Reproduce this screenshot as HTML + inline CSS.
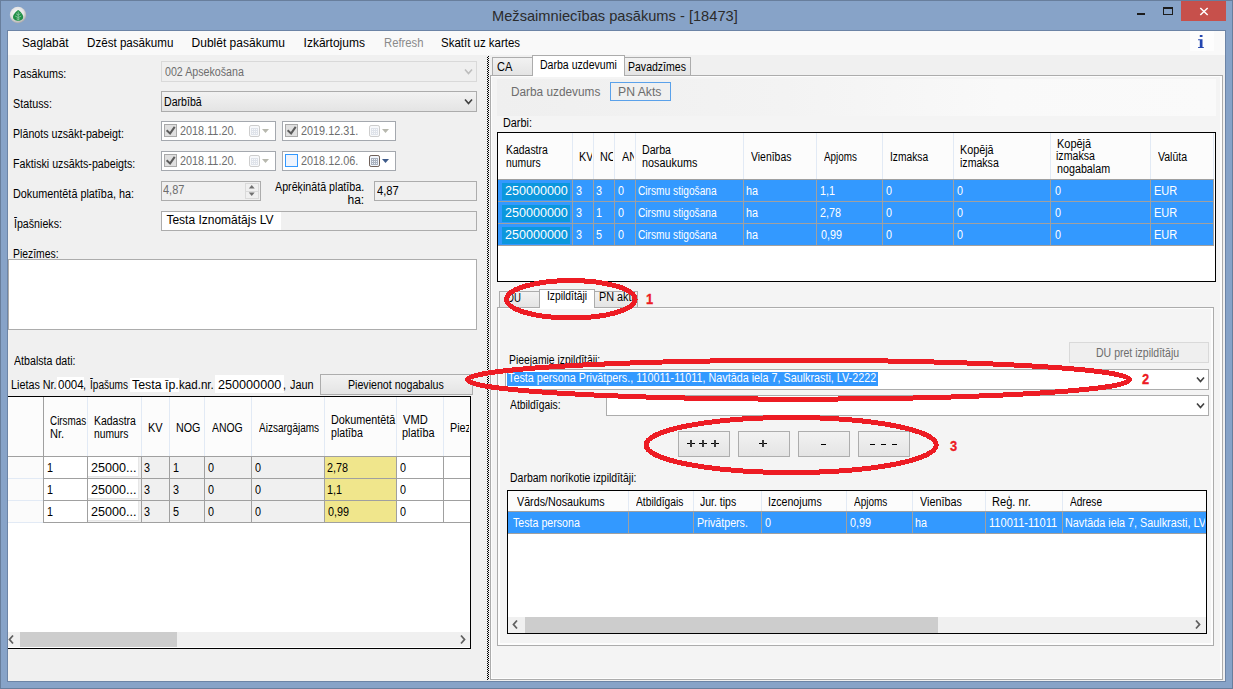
<!DOCTYPE html><html><head><meta charset="utf-8"><style>html,body{margin:0;padding:0;width:1233px;height:689px;overflow:hidden;background:#87a3c8}body{position:relative;font-family:"Liberation Sans",sans-serif}div{position:absolute;box-sizing:border-box}</style></head><body><div style="left:0px;top:0px;width:1233px;height:689px;background:#87a3c8;border:1px solid #687e9c"></div>
<div style="left:7px;top:30px;width:1219px;height:652px;border:1px solid #6c84a6;background:#f0f0f0"></div>
<svg style="position:absolute;left:9px;top:6px" width="18" height="18" viewBox="0 0 18 18"><defs><radialGradient id="ig" cx="45%" cy="40%" r="60%"><stop offset="0" stop-color="#ffffff"/><stop offset="0.65" stop-color="#e4e4e4"/><stop offset="1" stop-color="#a9a9a9"/></radialGradient></defs><circle cx="9" cy="9" r="8.2" fill="url(#ig)"/><path d="M9.2 4 C11.2 5.3 14.2 8.4 14.2 11.1 C14.2 13.6 12 14.9 9.2 14.9 C6.4 14.9 4 13.6 4 11.1 C4 8.4 7.2 5.3 9.2 4Z" fill="#219047"/><path d="M9.2 5.6 V14.6 M9.2 9.2 L7 7.6 M9.2 9.2 L11.4 7.6 M9.2 11.6 L6.2 10 M9.2 11.6 L12.2 10 M9.2 13.4 L7.6 12.8 M9.2 13.4 L10.8 12.8" stroke="#9fd1b0" stroke-width="0.75" fill="none"/></svg>
<div style="left:1181px;top:1px;width:45px;height:20px;background:#c7504b"></div>
<svg style="position:absolute;left:1199px;top:7px" width="10" height="9" viewBox="0 0 10 9"><path d="M1.3 1 L8.7 8 M8.7 1 L1.3 8" stroke="#fff" stroke-width="1.5"/></svg>
<div style="left:1163px;top:7px;width:10px;height:8px;border:1px solid #1c1c1c;border-top-width:2px"></div>
<div style="left:1137px;top:13px;width:8px;height:2px;background:#1c1c1c"></div>
<div style="left:8px;top:31px;width:1217px;height:24px;background:#f9f9f9"></div>
<div style="left:1190px;top:31px;width:24px;height:20px;background:#fdfdfd"></div>
<svg style="position:absolute;left:1196px;top:33px" width="9" height="17" viewBox="0 0 9 17"><rect x="3.8" y="2" width="2.7" height="2" fill="#2447b0"/><path d="M2.1 6.2 H6.5 V13.9 H7.8 V15.1 H2.1 V13.9 H3.8 V7.3 H2.1Z" fill="#2447b0"/></svg>
<div style="left:161px;top:61px;width:316px;height:21px;border:1px solid #d9d9d9;background:#efefef;"></div>
<svg style="position:absolute;left:464px;top:68px" width="10" height="8" viewBox="0 0 10 8"><path d="M1 1.5 L4.5 5.5 L8 1.5" stroke="#bdbdbd" stroke-width="1.6" fill="none"/></svg>
<div style="left:161px;top:91px;width:316px;height:21px;border:1px solid #acacac;background:linear-gradient(#f2f2f2,#e4e4e4);"></div>
<svg style="position:absolute;left:464px;top:98px" width="10" height="8" viewBox="0 0 10 8"><path d="M1 1.5 L4.5 5.5 L8 1.5" stroke="#404040" stroke-width="1.6" fill="none"/></svg>
<div style="left:161px;top:121px;width:115px;height:20px;border:1px solid #a4a8ae;background:#fff;"></div>
<div style="left:164px;top:124px;width:13px;height:13px;border:1px solid #a9a9a9;background:#e0e0e0;"></div>
<svg style="position:absolute;left:164px;top:124px" width="13" height="13" viewBox="0 0 13 13"><path d="M2.6 6.3 L6.1 9.4 L10.7 2.9" stroke="#5c5c5c" stroke-width="2" fill="none"/></svg>
<svg style="position:absolute;left:249px;top:125px" width="12" height="13" viewBox="0 0 12 13"><rect x="0.5" y="0.5" width="10" height="11" rx="1.6" fill="#f8f9fb" stroke="#cdcdcd"/><rect x="2" y="3" width="7" height="7" fill="#dfe3ea"/><rect x="3" y="4" width="1" height="1" fill="#f8f9fb"/><rect x="3" y="6" width="1" height="1" fill="#f8f9fb"/><rect x="3" y="8" width="1" height="1" fill="#f8f9fb"/><rect x="5" y="4" width="1" height="1" fill="#f8f9fb"/><rect x="5" y="6" width="1" height="1" fill="#f8f9fb"/><rect x="5" y="8" width="1" height="1" fill="#f8f9fb"/><rect x="7" y="4" width="1" height="1" fill="#f8f9fb"/><rect x="7" y="6" width="1" height="1" fill="#f8f9fb"/><rect x="7" y="8" width="1" height="1" fill="#f8f9fb"/></svg>
<svg style="position:absolute;left:262px;top:129px" width="8" height="5" viewBox="0 0 8 5"><path d="M0 0 H7 L3.5 4Z" fill="#b7b8ae"/></svg>
<div style="left:282px;top:121px;width:114px;height:20px;border:1px solid #a4a8ae;background:#fff;"></div>
<div style="left:285px;top:124px;width:13px;height:13px;border:1px solid #a9a9a9;background:#e0e0e0;"></div>
<svg style="position:absolute;left:285px;top:124px" width="13" height="13" viewBox="0 0 13 13"><path d="M2.6 6.3 L6.1 9.4 L10.7 2.9" stroke="#5c5c5c" stroke-width="2" fill="none"/></svg>
<svg style="position:absolute;left:369px;top:125px" width="12" height="13" viewBox="0 0 12 13"><rect x="0.5" y="0.5" width="10" height="11" rx="1.6" fill="#f8f9fb" stroke="#cdcdcd"/><rect x="2" y="3" width="7" height="7" fill="#dfe3ea"/><rect x="3" y="4" width="1" height="1" fill="#f8f9fb"/><rect x="3" y="6" width="1" height="1" fill="#f8f9fb"/><rect x="3" y="8" width="1" height="1" fill="#f8f9fb"/><rect x="5" y="4" width="1" height="1" fill="#f8f9fb"/><rect x="5" y="6" width="1" height="1" fill="#f8f9fb"/><rect x="5" y="8" width="1" height="1" fill="#f8f9fb"/><rect x="7" y="4" width="1" height="1" fill="#f8f9fb"/><rect x="7" y="6" width="1" height="1" fill="#f8f9fb"/><rect x="7" y="8" width="1" height="1" fill="#f8f9fb"/></svg>
<svg style="position:absolute;left:382px;top:129px" width="8" height="5" viewBox="0 0 8 5"><path d="M0 0 H7 L3.5 4Z" fill="#b7b8ae"/></svg>
<div style="left:161px;top:151px;width:115px;height:20px;border:1px solid #a4a8ae;background:#fff;"></div>
<div style="left:164px;top:154px;width:13px;height:13px;border:1px solid #a9a9a9;background:#e0e0e0;"></div>
<svg style="position:absolute;left:164px;top:154px" width="13" height="13" viewBox="0 0 13 13"><path d="M2.6 6.3 L6.1 9.4 L10.7 2.9" stroke="#5c5c5c" stroke-width="2" fill="none"/></svg>
<svg style="position:absolute;left:249px;top:155px" width="12" height="13" viewBox="0 0 12 13"><rect x="0.5" y="0.5" width="10" height="11" rx="1.6" fill="#f8f9fb" stroke="#cdcdcd"/><rect x="2" y="3" width="7" height="7" fill="#dfe3ea"/><rect x="3" y="4" width="1" height="1" fill="#f8f9fb"/><rect x="3" y="6" width="1" height="1" fill="#f8f9fb"/><rect x="3" y="8" width="1" height="1" fill="#f8f9fb"/><rect x="5" y="4" width="1" height="1" fill="#f8f9fb"/><rect x="5" y="6" width="1" height="1" fill="#f8f9fb"/><rect x="5" y="8" width="1" height="1" fill="#f8f9fb"/><rect x="7" y="4" width="1" height="1" fill="#f8f9fb"/><rect x="7" y="6" width="1" height="1" fill="#f8f9fb"/><rect x="7" y="8" width="1" height="1" fill="#f8f9fb"/></svg>
<svg style="position:absolute;left:262px;top:159px" width="8" height="5" viewBox="0 0 8 5"><path d="M0 0 H7 L3.5 4Z" fill="#b7b8ae"/></svg>
<div style="left:282px;top:151px;width:114px;height:20px;border:1px solid #a4a8ae;background:#fff;"></div>
<div style="left:285px;top:154px;width:13px;height:13px;border:1px solid #3399ff;background:#eef4fe;"></div>
<svg style="position:absolute;left:369px;top:155px" width="12" height="13" viewBox="0 0 12 13"><rect x="0.5" y="0.5" width="10" height="11" rx="1.6" fill="#f2f6fc" stroke="#6e5f58"/><rect x="2" y="3" width="7" height="7" fill="#a9b1be"/><rect x="3" y="4" width="1" height="1" fill="#eef2f8"/><rect x="3" y="6" width="1" height="1" fill="#eef2f8"/><rect x="3" y="8" width="1" height="1" fill="#eef2f8"/><rect x="5" y="4" width="1" height="1" fill="#eef2f8"/><rect x="5" y="6" width="1" height="1" fill="#eef2f8"/><rect x="5" y="8" width="1" height="1" fill="#eef2f8"/><rect x="7" y="4" width="1" height="1" fill="#eef2f8"/><rect x="7" y="6" width="1" height="1" fill="#eef2f8"/><rect x="7" y="8" width="1" height="1" fill="#eef2f8"/></svg>
<svg style="position:absolute;left:382px;top:159px" width="8" height="5" viewBox="0 0 8 5"><path d="M0 0 H7 L3.5 4Z" fill="#3d5a89"/></svg>
<div style="left:161px;top:181px;width:100px;height:20px;border:1px solid #acacac;background:#f0f0f0;"></div>
<div style="left:245px;top:183px;width:14px;height:16px;background:#f0f0f0;border:1px solid #dadada"></div>
<svg style="position:absolute;left:245px;top:183px" width="14" height="16" viewBox="0 0 14 16"><path d="M3.8 5.4 L6.75 2.1 L9.7 5.4Z" fill="#707070"/><path d="M3.8 9.6 L6.75 13.1 L9.7 9.6Z" fill="#707070"/><path d="M1 8.5 H13" stroke="#dadada"/></svg>
<div style="left:374px;top:181px;width:103px;height:20px;border:1px solid #acacac;background:#f0f0f0;"></div>
<div style="left:161px;top:211px;width:316px;height:20px;border:1px solid #acacac;background:#f0f0f0;"></div>
<div style="left:162px;top:212px;width:119px;height:18px;background:#fff"></div>
<div style="left:8px;top:259px;width:469px;height:71px;border:1px solid #acacac;background:#fff;"></div>
<div style="left:57px;top:377px;width:27px;height:13px;background:#fff"></div>
<div style="left:130px;top:378px;width:49px;height:14px;background:#fff"></div>
<div style="left:215px;top:375px;width:69px;height:18px;background:#fff"></div>
<div style="left:320px;top:374px;width:153px;height:21px;border:1px solid #adadad;background:linear-gradient(#f2f2f2,#e4e4e4);"></div>
<div style="left:8px;top:396px;width:463px;height:253px;background:#fff;border-top:1px solid #000;border-right:1px solid #000;border-bottom:1px solid #000"></div>
<div style="left:8px;top:397px;width:462px;height:59px;background:#fcfcfc"></div>
<div style="left:8px;top:456px;width:462px;height:1px;background:#a0a0a0"></div>
<div style="left:87px;top:397px;width:1px;height:59px;background:#e2eaf5"></div>
<div style="left:141px;top:397px;width:1px;height:59px;background:#e2eaf5"></div>
<div style="left:169px;top:397px;width:1px;height:59px;background:#e2eaf5"></div>
<div style="left:204px;top:397px;width:1px;height:59px;background:#e2eaf5"></div>
<div style="left:251px;top:397px;width:1px;height:59px;background:#e2eaf5"></div>
<div style="left:324px;top:397px;width:1px;height:59px;background:#e2eaf5"></div>
<div style="left:396px;top:397px;width:1px;height:59px;background:#e2eaf5"></div>
<div style="left:443px;top:397px;width:1px;height:59px;background:#e2eaf5"></div>
<div style="left:43px;top:397px;width:1px;height:126px;background:#a0a0a0"></div>
<div style="left:8px;top:457px;width:35px;height:66px;background:#fbfbfb"></div>
<div style="left:8px;top:478px;width:35px;height:1px;background:#e2eaf5"></div>
<div style="left:44px;top:478px;width:426px;height:1px;background:#a0a0a0"></div>
<div style="left:8px;top:500px;width:35px;height:1px;background:#e2eaf5"></div>
<div style="left:44px;top:500px;width:426px;height:1px;background:#a0a0a0"></div>
<div style="left:8px;top:522px;width:35px;height:1px;background:#e2eaf5"></div>
<div style="left:44px;top:522px;width:426px;height:1px;background:#a0a0a0"></div>
<div style="left:44px;top:457px;width:43px;height:21px;background:#fff"></div>
<div style="left:88px;top:457px;width:53px;height:21px;background:#f0f0f0"></div>
<div style="left:142px;top:457px;width:27px;height:21px;background:#f0f0f0"></div>
<div style="left:170px;top:457px;width:34px;height:21px;background:#f0f0f0"></div>
<div style="left:205px;top:457px;width:46px;height:21px;background:#f0f0f0"></div>
<div style="left:252px;top:457px;width:72px;height:21px;background:#f0f0f0"></div>
<div style="left:325px;top:457px;width:71px;height:21px;background:#f0e68c"></div>
<div style="left:397px;top:457px;width:46px;height:21px;background:#fff"></div>
<div style="left:444px;top:457px;width:26px;height:21px;background:#fff"></div>
<div style="left:88px;top:457px;width:51px;height:20px;background:#fff;border-right:1px solid #e6e6e6;border-bottom:1px solid #e6e6e6"></div>
<div style="left:44px;top:479px;width:43px;height:21px;background:#fff"></div>
<div style="left:88px;top:479px;width:53px;height:21px;background:#f0f0f0"></div>
<div style="left:142px;top:479px;width:27px;height:21px;background:#f0f0f0"></div>
<div style="left:170px;top:479px;width:34px;height:21px;background:#f0f0f0"></div>
<div style="left:205px;top:479px;width:46px;height:21px;background:#f0f0f0"></div>
<div style="left:252px;top:479px;width:72px;height:21px;background:#f0f0f0"></div>
<div style="left:325px;top:479px;width:71px;height:21px;background:#f0e68c"></div>
<div style="left:397px;top:479px;width:46px;height:21px;background:#fff"></div>
<div style="left:444px;top:479px;width:26px;height:21px;background:#fff"></div>
<div style="left:88px;top:479px;width:51px;height:20px;background:#fff;border-right:1px solid #e6e6e6;border-bottom:1px solid #e6e6e6"></div>
<div style="left:44px;top:501px;width:43px;height:21px;background:#fff"></div>
<div style="left:88px;top:501px;width:53px;height:21px;background:#f0f0f0"></div>
<div style="left:142px;top:501px;width:27px;height:21px;background:#f0f0f0"></div>
<div style="left:170px;top:501px;width:34px;height:21px;background:#f0f0f0"></div>
<div style="left:205px;top:501px;width:46px;height:21px;background:#f0f0f0"></div>
<div style="left:252px;top:501px;width:72px;height:21px;background:#f0f0f0"></div>
<div style="left:325px;top:501px;width:71px;height:21px;background:#f0e68c"></div>
<div style="left:397px;top:501px;width:46px;height:21px;background:#fff"></div>
<div style="left:444px;top:501px;width:26px;height:21px;background:#fff"></div>
<div style="left:88px;top:501px;width:51px;height:20px;background:#fff;border-right:1px solid #e6e6e6;border-bottom:1px solid #e6e6e6"></div>
<div style="left:87px;top:457px;width:1px;height:66px;background:#a0a0a0"></div>
<div style="left:141px;top:457px;width:1px;height:66px;background:#a0a0a0"></div>
<div style="left:169px;top:457px;width:1px;height:66px;background:#a0a0a0"></div>
<div style="left:204px;top:457px;width:1px;height:66px;background:#a0a0a0"></div>
<div style="left:251px;top:457px;width:1px;height:66px;background:#a0a0a0"></div>
<div style="left:324px;top:457px;width:1px;height:66px;background:#a0a0a0"></div>
<div style="left:396px;top:457px;width:1px;height:66px;background:#a0a0a0"></div>
<div style="left:443px;top:457px;width:1px;height:66px;background:#a0a0a0"></div>
<div style="left:8px;top:632px;width:462px;height:15px;background:#f0f0f0"></div>
<div style="left:20px;top:632px;width:157px;height:15px;background:#cdcdcd"></div>
<svg style="position:absolute;left:7px;top:634px" width="10" height="11" viewBox="0 0 10 11"><path d="M6 1.5 L2.5 5.5 L6 9.5" stroke="#606060" stroke-width="1.8" fill="none"/></svg>
<svg style="position:absolute;left:458px;top:634px" width="10" height="11" viewBox="0 0 10 11"><path d="M3 1.5 L6.5 5.5 L3 9.5" stroke="#606060" stroke-width="1.8" fill="none"/></svg>
<div style="left:487px;top:56px;width:2px;height:624px;background:conic-gradient(#000 25%,#f0f0f0 0 50%,#000 0 75%,#f0f0f0 0) 0 0/2px 2px"></div>
<div style="left:490px;top:75px;width:733px;height:605px;border:1px solid #acacac;background:#f4f4f4"></div>
<div style="left:491px;top:76px;width:731px;height:603px;border:1px solid #fdfdfd;border-right-width:2px;border-bottom-width:1px"></div>
<div style="left:492px;top:57px;width:41px;height:19px;border:1px solid #acacac;background:linear-gradient(#f2f2f2,#e4e4e4);"></div>
<div style="left:624px;top:57px;width:67px;height:19px;border:1px solid #acacac;background:linear-gradient(#f2f2f2,#e4e4e4);"></div>
<div style="left:532px;top:55px;width:93px;height:21px;border:1px solid #acacac;border-bottom:none;background:#fff"></div>
<div style="left:533px;top:75px;width:91px;height:2px;background:#fff"></div>
<div style="left:497px;top:79px;width:719px;height:37px;background:linear-gradient(90deg,#efefef,#f3f3f3 40%,#f9f9f9 70%,#fafafa)"></div>
<div style="left:610px;top:82px;width:61px;height:19px;border:1px solid #5aa1ea;background:#f0f0f0;"></div>
<div style="left:497px;top:132px;width:719px;height:150px;border:1px solid #000;background:#fff"></div>
<div style="left:498px;top:133px;width:717px;height:46px;background:#fcfcfc"></div>
<div style="left:572px;top:133px;width:1px;height:46px;background:#e2eaf5"></div>
<div style="left:593px;top:133px;width:1px;height:46px;background:#e2eaf5"></div>
<div style="left:614px;top:133px;width:1px;height:46px;background:#e2eaf5"></div>
<div style="left:635px;top:133px;width:1px;height:46px;background:#e2eaf5"></div>
<div style="left:743px;top:133px;width:1px;height:46px;background:#e2eaf5"></div>
<div style="left:816px;top:133px;width:1px;height:46px;background:#e2eaf5"></div>
<div style="left:882px;top:133px;width:1px;height:46px;background:#e2eaf5"></div>
<div style="left:953px;top:133px;width:1px;height:46px;background:#e2eaf5"></div>
<div style="left:1050px;top:133px;width:1px;height:46px;background:#e2eaf5"></div>
<div style="left:1150px;top:133px;width:1px;height:46px;background:#e2eaf5"></div>
<div style="left:1213px;top:133px;width:1px;height:46px;background:#e2eaf5"></div>
<div style="left:498px;top:179px;width:715px;height:1px;background:#a0a0a0"></div>
<div style="left:498px;top:180px;width:715px;height:21px;background:#3399ff"></div>
<div style="left:502px;top:183px;width:68px;height:17px;background:#0c97dd"></div>
<div style="left:498px;top:202px;width:715px;height:21px;background:#3399ff"></div>
<div style="left:502px;top:205px;width:68px;height:17px;background:#0c97dd"></div>
<div style="left:498px;top:224px;width:715px;height:21px;background:#3399ff"></div>
<div style="left:502px;top:227px;width:68px;height:17px;background:#0c97dd"></div>
<div style="left:498px;top:201px;width:716px;height:1px;background:#a0a0a0"></div>
<div style="left:498px;top:223px;width:716px;height:1px;background:#a0a0a0"></div>
<div style="left:498px;top:245px;width:716px;height:1px;background:#a0a0a0"></div>
<div style="left:572px;top:179px;width:1px;height:67px;background:#a0a0a0"></div>
<div style="left:593px;top:179px;width:1px;height:67px;background:#a0a0a0"></div>
<div style="left:614px;top:179px;width:1px;height:67px;background:#a0a0a0"></div>
<div style="left:635px;top:179px;width:1px;height:67px;background:#a0a0a0"></div>
<div style="left:743px;top:179px;width:1px;height:67px;background:#a0a0a0"></div>
<div style="left:816px;top:179px;width:1px;height:67px;background:#a0a0a0"></div>
<div style="left:882px;top:179px;width:1px;height:67px;background:#a0a0a0"></div>
<div style="left:953px;top:179px;width:1px;height:67px;background:#a0a0a0"></div>
<div style="left:1050px;top:179px;width:1px;height:67px;background:#a0a0a0"></div>
<div style="left:1150px;top:179px;width:1px;height:67px;background:#a0a0a0"></div>
<div style="left:1213px;top:179px;width:1px;height:67px;background:#a0a0a0"></div>
<div style="left:497px;top:307px;width:717px;height:339px;border:1px solid #acacac;background:#f4f4f4"></div>
<div style="left:498px;top:308px;width:715px;height:337px;border:2px solid #fdfdfd;border-top-width:1px"></div>
<div style="left:499px;top:291px;width:41px;height:17px;border:1px solid #acacac;background:linear-gradient(#f2f2f2,#e4e4e4);"></div>
<div style="left:594px;top:291px;width:44px;height:17px;border:1px solid #acacac;background:linear-gradient(#f2f2f2,#e4e4e4);"></div>
<div style="left:539px;top:289px;width:56px;height:19px;border:1px solid #acacac;border-bottom:none;background:#fff"></div>
<div style="left:540px;top:307px;width:54px;height:2px;background:#fff"></div>
<div style="left:1069px;top:342px;width:140px;height:21px;border:1px solid #d9d9d9;background:#efefef;"></div>
<div style="left:505px;top:369px;width:704px;height:21px;border:1px solid #acacac;background:#fff;"></div>
<div style="left:507px;top:372px;width:371px;height:14px;background:#3399ff"></div>
<svg style="position:absolute;left:1196px;top:376px" width="10" height="8" viewBox="0 0 10 8"><path d="M1 1.5 L4.5 5.5 L8 1.5" stroke="#404040" stroke-width="1.6" fill="none"/></svg>
<div style="left:606px;top:395px;width:603px;height:21px;border:1px solid #acacac;background:#fff;"></div>
<svg style="position:absolute;left:1196px;top:402px" width="10" height="8" viewBox="0 0 10 8"><path d="M1 1.5 L4.5 5.5 L8 1.5" stroke="#404040" stroke-width="1.6" fill="none"/></svg>
<div style="left:678px;top:431px;width:52px;height:26px;border:1px solid #adadad;background:linear-gradient(#f2f2f2,#e4e4e4);"></div>
<div style="left:738px;top:431px;width:52px;height:26px;border:1px solid #adadad;background:linear-gradient(#f2f2f2,#e4e4e4);"></div>
<div style="left:798px;top:431px;width:52px;height:26px;border:1px solid #adadad;background:linear-gradient(#f2f2f2,#e4e4e4);"></div>
<div style="left:858px;top:431px;width:52px;height:26px;border:1px solid #adadad;background:linear-gradient(#f2f2f2,#e4e4e4);"></div>
<div style="left:687px;top:443px;width:8px;height:1px;background:#000"></div>
<div style="left:690px;top:440px;width:2px;height:7px;background:#3a3a3a"></div>
<div style="left:699px;top:443px;width:8px;height:1px;background:#000"></div>
<div style="left:702px;top:440px;width:2px;height:7px;background:#3a3a3a"></div>
<div style="left:711px;top:443px;width:8px;height:1px;background:#000"></div>
<div style="left:714px;top:440px;width:2px;height:7px;background:#3a3a3a"></div>
<div style="left:759px;top:443px;width:8px;height:1px;background:#000"></div>
<div style="left:762px;top:440px;width:2px;height:7px;background:#3a3a3a"></div>
<div style="left:821px;top:444px;width:5px;height:1px;background:#000"></div>
<div style="left:870px;top:444px;width:5px;height:1px;background:#000"></div>
<div style="left:881px;top:444px;width:5px;height:1px;background:#000"></div>
<div style="left:892px;top:444px;width:5px;height:1px;background:#000"></div>
<div style="left:507px;top:490px;width:700px;height:144px;border:1px solid #000;background:#fff"></div>
<div style="left:508px;top:491px;width:698px;height:20px;background:#fcfcfc"></div>
<div style="left:628px;top:491px;width:1px;height:20px;background:#e2eaf5"></div>
<div style="left:693px;top:491px;width:1px;height:20px;background:#e2eaf5"></div>
<div style="left:761px;top:491px;width:1px;height:20px;background:#e2eaf5"></div>
<div style="left:846px;top:491px;width:1px;height:20px;background:#e2eaf5"></div>
<div style="left:912px;top:491px;width:1px;height:20px;background:#e2eaf5"></div>
<div style="left:985px;top:491px;width:1px;height:20px;background:#e2eaf5"></div>
<div style="left:1062px;top:491px;width:1px;height:20px;background:#e2eaf5"></div>
<div style="left:508px;top:511px;width:698px;height:1px;background:#a0a0a0"></div>
<div style="left:508px;top:512px;width:698px;height:21px;background:#3399ff"></div>
<div style="left:508px;top:533px;width:698px;height:1px;background:#a0a0a0"></div>
<div style="left:628px;top:511px;width:1px;height:23px;background:#a0a0a0"></div>
<div style="left:693px;top:511px;width:1px;height:23px;background:#a0a0a0"></div>
<div style="left:761px;top:511px;width:1px;height:23px;background:#a0a0a0"></div>
<div style="left:846px;top:511px;width:1px;height:23px;background:#a0a0a0"></div>
<div style="left:912px;top:511px;width:1px;height:23px;background:#a0a0a0"></div>
<div style="left:985px;top:511px;width:1px;height:23px;background:#a0a0a0"></div>
<div style="left:1062px;top:511px;width:1px;height:23px;background:#a0a0a0"></div>
<div style="left:508px;top:617px;width:698px;height:16px;background:#f0f0f0"></div>
<div style="left:525px;top:617px;width:413px;height:16px;background:#cdcdcd"></div>
<svg style="position:absolute;left:511px;top:619px" width="10" height="11" viewBox="0 0 10 11"><path d="M6 1.5 L2.5 5.5 L6 9.5" stroke="#606060" stroke-width="1.8" fill="none"/></svg>
<svg style="position:absolute;left:1193px;top:619px" width="10" height="11" viewBox="0 0 10 11"><path d="M3 1.5 L6.5 5.5 L3 9.5" stroke="#606060" stroke-width="1.8" fill="none"/></svg>
<div style="left:492.42px;top:8px;font-size:15px;line-height:16px;white-space:nowrap;color:#2b2b2b;font-weight:normal;transform:scaleX(0.9760);transform-origin:0 0;">Mežsaimniecības pasākums - [18473]</div>
<div style="left:21.92px;top:35px;font-size:12px;line-height:16px;white-space:nowrap;color:#000;font-weight:normal;transform:scaleX(0.9804);transform-origin:0 0;">Saglabāt</div>
<div style="left:86.53px;top:35px;font-size:12px;line-height:16px;white-space:nowrap;color:#000;font-weight:normal;transform:scaleX(0.9670);transform-origin:0 0;">Dzēst pasākumu</div>
<div style="left:191.60px;top:35px;font-size:12px;line-height:16px;white-space:nowrap;color:#000;font-weight:normal;">Dublēt pasākumu</div>
<div style="left:303.60px;top:35px;font-size:12px;line-height:16px;white-space:nowrap;color:#000;font-weight:normal;">Izkārtojums</div>
<div style="left:383.66px;top:35px;font-size:12px;line-height:16px;white-space:nowrap;color:#8a8a8a;font-weight:normal;transform:scaleX(0.9400);transform-origin:0 0;">Refresh</div>
<div style="left:441.24px;top:35px;font-size:12px;line-height:16px;white-space:nowrap;color:#000;font-weight:normal;transform:scaleX(0.9556);transform-origin:0 0;">Skatīt uz kartes</div>
<div style="left:13.40px;top:66px;font-size:12px;line-height:16px;white-space:nowrap;color:#000;font-weight:normal;transform:scaleX(0.8982);transform-origin:0 0;">Pasākums:</div>
<div style="left:13.40px;top:96px;font-size:12px;line-height:16px;white-space:nowrap;color:#000;font-weight:normal;transform:scaleX(0.8976);transform-origin:0 0;">Statuss:</div>
<div style="left:13.41px;top:126px;font-size:12px;line-height:16px;white-space:nowrap;color:#000;font-weight:normal;transform:scaleX(0.8886);transform-origin:0 0;">Plānots uzsākt-pabeigt:</div>
<div style="left:13.41px;top:156px;font-size:12px;line-height:16px;white-space:nowrap;color:#000;font-weight:normal;transform:scaleX(0.8896);transform-origin:0 0;">Faktiski uzsākts-pabeigts:</div>
<div style="left:13.40px;top:186px;font-size:12px;line-height:16px;white-space:nowrap;color:#000;font-weight:normal;transform:scaleX(0.9023);transform-origin:0 0;">Dokumentētā platība, ha:</div>
<div style="left:14.30px;top:216px;font-size:12px;line-height:16px;white-space:nowrap;color:#000;font-weight:normal;transform:scaleX(0.8868);transform-origin:0 0;">Īpašnieks:</div>
<div style="left:165.00px;top:64px;font-size:12px;line-height:16px;white-space:nowrap;color:#6d6d6d;font-weight:normal;transform:scaleX(0.8888);transform-origin:0 0;">002 Apsekošana</div>
<div style="left:164.12px;top:94px;font-size:12px;line-height:16px;white-space:nowrap;color:#000;font-weight:normal;transform:scaleX(0.8833);transform-origin:0 0;">Darbībā</div>
<div style="left:180.30px;top:123px;font-size:12px;line-height:16px;white-space:nowrap;color:#6d6d6d;font-weight:normal;transform:scaleX(0.9033);transform-origin:0 0;">2018.11.20.</div>
<div style="left:301.30px;top:123px;font-size:12px;line-height:16px;white-space:nowrap;color:#6d6d6d;font-weight:normal;transform:scaleX(0.9033);transform-origin:0 0;">2019.12.31.</div>
<div style="left:180.30px;top:153px;font-size:12px;line-height:16px;white-space:nowrap;color:#6d6d6d;font-weight:normal;transform:scaleX(0.9033);transform-origin:0 0;">2018.11.20.</div>
<div style="left:301.30px;top:153px;font-size:12px;line-height:16px;white-space:nowrap;color:#6d6d6d;font-weight:normal;transform:scaleX(0.9033);transform-origin:0 0;">2018.12.06.</div>
<div style="left:162.90px;top:182px;font-size:12px;line-height:16px;white-space:nowrap;color:#6d6d6d;font-weight:normal;transform:scaleX(0.9174);transform-origin:0 0;">4,87</div>
<div style="left:275.30px;top:179px;font-size:12px;line-height:16px;white-space:nowrap;color:#000;font-weight:normal;transform:scaleX(0.8909);transform-origin:0 0;">Aprēķinātā platība.</div>
<div style="left:347.50px;top:192px;font-size:12px;line-height:16px;white-space:nowrap;color:#000;font-weight:normal;">ha:</div>
<div style="left:376.50px;top:183px;font-size:12px;line-height:16px;white-space:nowrap;color:#000;font-weight:normal;transform:scaleX(0.9304);transform-origin:0 0;">4,87</div>
<div style="left:166.40px;top:212px;font-size:12px;line-height:16px;white-space:nowrap;color:#000;font-weight:normal;">Testa Iznomātājs LV</div>
<div style="left:13.33px;top:246px;font-size:12px;line-height:16px;white-space:nowrap;color:#000;font-weight:normal;transform:scaleX(0.8667);transform-origin:0 0;">Piezīmes:</div>
<div style="left:14.30px;top:353px;font-size:12px;line-height:16px;white-space:nowrap;color:#000;font-weight:normal;transform:scaleX(0.8868);transform-origin:0 0;">Atbalsta dati:</div>
<div style="left:10.80px;top:377px;font-size:12px;line-height:16px;white-space:nowrap;color:#000;font-weight:normal;transform:scaleX(0.9000);transform-origin:0 0;">Lietas Nr.</div>
<div style="left:57.50px;top:377px;font-size:12px;line-height:16px;white-space:nowrap;color:#000;font-weight:normal;transform:scaleX(0.9630);transform-origin:0 0;">0004</div>
<div style="left:83.10px;top:377px;font-size:12px;line-height:16px;white-space:nowrap;color:#000;font-weight:normal;transform:scaleX(0.9000);transform-origin:0 0;">,</div>
<div style="left:89.50px;top:377px;font-size:12px;line-height:16px;white-space:nowrap;color:#000;font-weight:normal;transform:scaleX(0.8378);transform-origin:0 0;">Īpašums</div>
<div style="left:132.20px;top:377px;font-size:12px;line-height:16px;white-space:nowrap;color:#000;font-weight:normal;transform:scaleX(1.0318);transform-origin:0 0;">Testa īp.</div>
<div style="left:178.74px;top:377px;font-size:12px;line-height:16px;white-space:nowrap;color:#000;font-weight:normal;transform:scaleX(0.9647);transform-origin:0 0;">kad.nr.</div>
<div style="left:218.25px;top:377px;font-size:12px;line-height:16px;white-space:nowrap;color:#000;font-weight:normal;transform:scaleX(1.0525);transform-origin:0 0;">250000000</div>
<div style="left:283.10px;top:377px;font-size:12px;line-height:16px;white-space:nowrap;color:#000;font-weight:normal;transform:scaleX(0.9000);transform-origin:0 0;">,</div>
<div style="left:290.30px;top:377px;font-size:12px;line-height:16px;white-space:nowrap;color:#000;font-weight:normal;transform:scaleX(0.9080);transform-origin:0 0;">Jaun</div>
<div style="left:347.61px;top:377px;font-size:12px;line-height:16px;white-space:nowrap;color:#000;font-weight:normal;transform:scaleX(0.8860);transform-origin:0 0;">Pievienot nogabalus</div>
<div style="left:49.88px;top:413px;font-size:12px;line-height:16px;white-space:nowrap;color:#000;font-weight:normal;transform:scaleX(0.8233);transform-origin:0 0;">Cirsmas</div>
<div style="left:49.78px;top:426px;font-size:12px;line-height:16px;white-space:nowrap;color:#000;font-weight:normal;transform:scaleX(0.9200);transform-origin:0 0;">Nr.</div>
<div style="left:94.13px;top:413px;font-size:12px;line-height:16px;white-space:nowrap;color:#000;font-weight:normal;transform:scaleX(0.8723);transform-origin:0 0;">Kadastra</div>
<div style="left:93.84px;top:426px;font-size:12px;line-height:16px;white-space:nowrap;color:#000;font-weight:normal;transform:scaleX(0.8615);transform-origin:0 0;">numurs</div>
<div style="left:148.09px;top:420px;font-size:12px;line-height:16px;white-space:nowrap;color:#000;font-weight:normal;transform:scaleX(0.9133);transform-origin:0 0;">KV</div>
<div style="left:176.41px;top:420px;font-size:12px;line-height:16px;white-space:nowrap;color:#000;font-weight:normal;transform:scaleX(0.8923);transform-origin:0 0;">NOG</div>
<div style="left:212.00px;top:420px;font-size:12px;line-height:16px;white-space:nowrap;color:#000;font-weight:normal;transform:scaleX(0.8686);transform-origin:0 0;">ANOG</div>
<div style="left:259.00px;top:420px;font-size:12px;line-height:16px;white-space:nowrap;color:#000;font-weight:normal;transform:scaleX(0.8347);transform-origin:0 0;">Aizsargājams</div>
<div style="left:331.20px;top:412px;font-size:12px;line-height:16px;white-space:nowrap;color:#000;font-weight:normal;transform:scaleX(0.9000);transform-origin:0 0;">Dokumentētā</div>
<div style="left:331.22px;top:425px;font-size:12px;line-height:16px;white-space:nowrap;color:#000;font-weight:normal;transform:scaleX(0.8829);transform-origin:0 0;">platība</div>
<div style="left:403.40px;top:412px;font-size:12px;line-height:16px;white-space:nowrap;color:#000;font-weight:normal;transform:scaleX(0.9269);transform-origin:0 0;">VMD</div>
<div style="left:402.49px;top:425px;font-size:12px;line-height:16px;white-space:nowrap;color:#000;font-weight:normal;transform:scaleX(0.9057);transform-origin:0 0;">platība</div>
<div style="left:450.10px;top:420px;width:18.90px;height:16px;overflow:hidden"><div style="left:0;top:0;font-size:12px;line-height:16px;white-space:nowrap;color:#000;font-weight:normal;transform:scaleX(0.9000);transform-origin:0 0;">Piez</div></div>
<div style="left:46.60px;top:460px;font-size:12px;line-height:16px;white-space:nowrap;color:#000;font-weight:normal;transform:scaleX(0.9000);transform-origin:0 0;">1</div>
<div style="left:90.75px;top:460px;font-size:12px;line-height:16px;white-space:nowrap;color:#000;font-weight:normal;transform:scaleX(1.0488);transform-origin:0 0;">25000...</div>
<div style="left:143.90px;top:460px;font-size:12px;line-height:16px;white-space:nowrap;color:#000;font-weight:normal;transform:scaleX(0.9000);transform-origin:0 0;">3</div>
<div style="left:172.80px;top:460px;font-size:12px;line-height:16px;white-space:nowrap;color:#000;font-weight:normal;transform:scaleX(0.9000);transform-origin:0 0;">1</div>
<div style="left:208.00px;top:460px;font-size:12px;line-height:16px;white-space:nowrap;color:#000;font-weight:normal;transform:scaleX(0.9000);transform-origin:0 0;">0</div>
<div style="left:255.30px;top:460px;font-size:12px;line-height:16px;white-space:nowrap;color:#000;font-weight:normal;transform:scaleX(0.9000);transform-origin:0 0;">0</div>
<div style="left:327.10px;top:460px;font-size:12px;line-height:16px;white-space:nowrap;color:#000;font-weight:normal;transform:scaleX(0.9000);transform-origin:0 0;">2,78</div>
<div style="left:400.00px;top:460px;font-size:12px;line-height:16px;white-space:nowrap;color:#000;font-weight:normal;transform:scaleX(0.9000);transform-origin:0 0;">0</div>
<div style="left:46.60px;top:482px;font-size:12px;line-height:16px;white-space:nowrap;color:#000;font-weight:normal;transform:scaleX(0.9000);transform-origin:0 0;">1</div>
<div style="left:90.75px;top:482px;font-size:12px;line-height:16px;white-space:nowrap;color:#000;font-weight:normal;transform:scaleX(1.0488);transform-origin:0 0;">25000...</div>
<div style="left:143.90px;top:482px;font-size:12px;line-height:16px;white-space:nowrap;color:#000;font-weight:normal;transform:scaleX(0.9000);transform-origin:0 0;">3</div>
<div style="left:172.80px;top:482px;font-size:12px;line-height:16px;white-space:nowrap;color:#000;font-weight:normal;transform:scaleX(0.9000);transform-origin:0 0;">3</div>
<div style="left:208.00px;top:482px;font-size:12px;line-height:16px;white-space:nowrap;color:#000;font-weight:normal;transform:scaleX(0.9000);transform-origin:0 0;">0</div>
<div style="left:255.30px;top:482px;font-size:12px;line-height:16px;white-space:nowrap;color:#000;font-weight:normal;transform:scaleX(0.9000);transform-origin:0 0;">0</div>
<div style="left:327.10px;top:482px;font-size:12px;line-height:16px;white-space:nowrap;color:#000;font-weight:normal;transform:scaleX(0.9000);transform-origin:0 0;">1,1</div>
<div style="left:400.00px;top:482px;font-size:12px;line-height:16px;white-space:nowrap;color:#000;font-weight:normal;transform:scaleX(0.9000);transform-origin:0 0;">0</div>
<div style="left:46.60px;top:504px;font-size:12px;line-height:16px;white-space:nowrap;color:#000;font-weight:normal;transform:scaleX(0.9000);transform-origin:0 0;">1</div>
<div style="left:90.75px;top:504px;font-size:12px;line-height:16px;white-space:nowrap;color:#000;font-weight:normal;transform:scaleX(1.0488);transform-origin:0 0;">25000...</div>
<div style="left:143.90px;top:504px;font-size:12px;line-height:16px;white-space:nowrap;color:#000;font-weight:normal;transform:scaleX(0.9000);transform-origin:0 0;">3</div>
<div style="left:172.80px;top:504px;font-size:12px;line-height:16px;white-space:nowrap;color:#000;font-weight:normal;transform:scaleX(0.9000);transform-origin:0 0;">5</div>
<div style="left:208.00px;top:504px;font-size:12px;line-height:16px;white-space:nowrap;color:#000;font-weight:normal;transform:scaleX(0.9000);transform-origin:0 0;">0</div>
<div style="left:255.30px;top:504px;font-size:12px;line-height:16px;white-space:nowrap;color:#000;font-weight:normal;transform:scaleX(0.9000);transform-origin:0 0;">0</div>
<div style="left:328.00px;top:504px;font-size:12px;line-height:16px;white-space:nowrap;color:#000;font-weight:normal;transform:scaleX(0.9000);transform-origin:0 0;">0,99</div>
<div style="left:400.00px;top:504px;font-size:12px;line-height:16px;white-space:nowrap;color:#000;font-weight:normal;transform:scaleX(0.9000);transform-origin:0 0;">0</div>
<div style="left:496.68px;top:59px;font-size:12px;line-height:16px;white-space:nowrap;color:#000;font-weight:normal;transform:scaleX(0.9187);transform-origin:0 0;">CA</div>
<div style="left:539.52px;top:57px;font-size:12px;line-height:16px;white-space:nowrap;color:#000;font-weight:normal;transform:scaleX(0.8791);transform-origin:0 0;">Darba uzdevumi</div>
<div style="left:628.42px;top:59px;font-size:12px;line-height:16px;white-space:nowrap;color:#000;font-weight:normal;transform:scaleX(0.8769);transform-origin:0 0;">Pavadzīmes</div>
<div style="left:511.32px;top:84px;font-size:12px;line-height:16px;white-space:nowrap;color:#6d6d6d;font-weight:normal;transform:scaleX(0.9843);transform-origin:0 0;">Darba uzdevums</div>
<div style="left:617.98px;top:84px;font-size:12px;line-height:16px;white-space:nowrap;color:#6d6d6d;font-weight:normal;transform:scaleX(1.0171);transform-origin:0 0;">PN Akts</div>
<div style="left:502.50px;top:115px;font-size:12px;line-height:16px;white-space:nowrap;color:#000;font-weight:normal;transform:scaleX(0.9033);transform-origin:0 0;">Darbi:</div>
<div style="left:506.23px;top:142px;font-size:12px;line-height:16px;white-space:nowrap;color:#000;font-weight:normal;transform:scaleX(0.8702);transform-origin:0 0;">Kadastra</div>
<div style="left:505.64px;top:155px;font-size:12px;line-height:16px;white-space:nowrap;color:#000;font-weight:normal;transform:scaleX(0.8641);transform-origin:0 0;">numurs</div>
<div style="left:579.30px;top:149px;width:12.70px;height:16px;overflow:hidden"><div style="left:0;top:0;font-size:12px;line-height:16px;white-space:nowrap;color:#000;font-weight:normal;transform:scaleX(0.9000);transform-origin:0 0;">KV</div></div>
<div style="left:600.00px;top:149px;width:13.00px;height:16px;overflow:hidden"><div style="left:0;top:0;font-size:12px;line-height:16px;white-space:nowrap;color:#000;font-weight:normal;transform:scaleX(0.9000);transform-origin:0 0;">NO</div></div>
<div style="left:621.50px;top:149px;width:12.50px;height:16px;overflow:hidden"><div style="left:0;top:0;font-size:12px;line-height:16px;white-space:nowrap;color:#000;font-weight:normal;transform:scaleX(0.9000);transform-origin:0 0;">AN</div></div>
<div style="left:642.31px;top:142px;font-size:12px;line-height:16px;white-space:nowrap;color:#000;font-weight:normal;transform:scaleX(0.8875);transform-origin:0 0;">Darba</div>
<div style="left:641.50px;top:155px;font-size:12px;line-height:16px;white-space:nowrap;color:#000;font-weight:normal;transform:scaleX(0.9017);transform-origin:0 0;">nosaukums</div>
<div style="left:751.20px;top:149px;font-size:12px;line-height:16px;white-space:nowrap;color:#000;font-weight:normal;transform:scaleX(0.8696);transform-origin:0 0;">Vienības</div>
<div style="left:824.20px;top:149px;font-size:12px;line-height:16px;white-space:nowrap;color:#000;font-weight:normal;transform:scaleX(0.8225);transform-origin:0 0;">Apjoms</div>
<div style="left:889.55px;top:149px;font-size:12px;line-height:16px;white-space:nowrap;color:#000;font-weight:normal;transform:scaleX(0.8523);transform-origin:0 0;">Izmaksa</div>
<div style="left:960.10px;top:142px;font-size:12px;line-height:16px;white-space:nowrap;color:#000;font-weight:normal;transform:scaleX(0.9000);transform-origin:0 0;">Kopējā</div>
<div style="left:959.52px;top:155px;font-size:12px;line-height:16px;white-space:nowrap;color:#000;font-weight:normal;transform:scaleX(0.8814);transform-origin:0 0;">izmaksa</div>
<div style="left:1056.79px;top:136px;font-size:12px;line-height:16px;white-space:nowrap;color:#000;font-weight:normal;transform:scaleX(0.9139);transform-origin:0 0;">Kopējā</div>
<div style="left:1056.42px;top:148px;font-size:12px;line-height:16px;white-space:nowrap;color:#000;font-weight:normal;transform:scaleX(0.8837);transform-origin:0 0;">izmaksa</div>
<div style="left:1056.61px;top:161px;font-size:12px;line-height:16px;white-space:nowrap;color:#000;font-weight:normal;transform:scaleX(0.8948);transform-origin:0 0;">nogabalam</div>
<div style="left:1158.00px;top:149px;font-size:12px;line-height:16px;white-space:nowrap;color:#000;font-weight:normal;transform:scaleX(0.8788);transform-origin:0 0;">Valūta</div>
<div style="left:505.05px;top:183px;font-size:12px;line-height:16px;white-space:nowrap;color:#fff;font-weight:normal;transform:scaleX(1.0458);transform-origin:0 0;">250000000</div>
<div style="left:575.60px;top:183px;font-size:12px;line-height:16px;white-space:nowrap;color:#fff;font-weight:normal;transform:scaleX(0.9000);transform-origin:0 0;">3</div>
<div style="left:596.20px;top:183px;font-size:12px;line-height:16px;white-space:nowrap;color:#fff;font-weight:normal;transform:scaleX(0.9000);transform-origin:0 0;">3</div>
<div style="left:618.10px;top:183px;font-size:12px;line-height:16px;white-space:nowrap;color:#fff;font-weight:normal;transform:scaleX(0.9000);transform-origin:0 0;">0</div>
<div style="left:638.25px;top:183px;font-size:12px;line-height:16px;white-space:nowrap;color:#fff;font-weight:normal;transform:scaleX(0.8489);transform-origin:0 0;">Cirsmu stigošana</div>
<div style="left:745.70px;top:183px;font-size:12px;line-height:16px;white-space:nowrap;color:#fff;font-weight:normal;transform:scaleX(0.9000);transform-origin:0 0;">ha</div>
<div style="left:820.10px;top:183px;font-size:12px;line-height:16px;white-space:nowrap;color:#fff;font-weight:normal;transform:scaleX(0.9000);transform-origin:0 0;">1,1</div>
<div style="left:886.40px;top:183px;font-size:12px;line-height:16px;white-space:nowrap;color:#fff;font-weight:normal;transform:scaleX(0.9000);transform-origin:0 0;">0</div>
<div style="left:957.30px;top:183px;font-size:12px;line-height:16px;white-space:nowrap;color:#fff;font-weight:normal;transform:scaleX(0.9000);transform-origin:0 0;">0</div>
<div style="left:1054.60px;top:183px;font-size:12px;line-height:16px;white-space:nowrap;color:#fff;font-weight:normal;transform:scaleX(0.9000);transform-origin:0 0;">0</div>
<div style="left:1153.78px;top:183px;font-size:12px;line-height:16px;white-space:nowrap;color:#fff;font-weight:normal;transform:scaleX(0.9208);transform-origin:0 0;">EUR</div>
<div style="left:505.05px;top:205px;font-size:12px;line-height:16px;white-space:nowrap;color:#fff;font-weight:normal;transform:scaleX(1.0458);transform-origin:0 0;">250000000</div>
<div style="left:575.60px;top:205px;font-size:12px;line-height:16px;white-space:nowrap;color:#fff;font-weight:normal;transform:scaleX(0.9000);transform-origin:0 0;">3</div>
<div style="left:596.20px;top:205px;font-size:12px;line-height:16px;white-space:nowrap;color:#fff;font-weight:normal;transform:scaleX(0.9000);transform-origin:0 0;">1</div>
<div style="left:618.10px;top:205px;font-size:12px;line-height:16px;white-space:nowrap;color:#fff;font-weight:normal;transform:scaleX(0.9000);transform-origin:0 0;">0</div>
<div style="left:638.25px;top:205px;font-size:12px;line-height:16px;white-space:nowrap;color:#fff;font-weight:normal;transform:scaleX(0.8489);transform-origin:0 0;">Cirsmu stigošana</div>
<div style="left:745.70px;top:205px;font-size:12px;line-height:16px;white-space:nowrap;color:#fff;font-weight:normal;transform:scaleX(0.9000);transform-origin:0 0;">ha</div>
<div style="left:820.10px;top:205px;font-size:12px;line-height:16px;white-space:nowrap;color:#fff;font-weight:normal;transform:scaleX(0.9000);transform-origin:0 0;">2,78</div>
<div style="left:886.40px;top:205px;font-size:12px;line-height:16px;white-space:nowrap;color:#fff;font-weight:normal;transform:scaleX(0.9000);transform-origin:0 0;">0</div>
<div style="left:957.30px;top:205px;font-size:12px;line-height:16px;white-space:nowrap;color:#fff;font-weight:normal;transform:scaleX(0.9000);transform-origin:0 0;">0</div>
<div style="left:1054.60px;top:205px;font-size:12px;line-height:16px;white-space:nowrap;color:#fff;font-weight:normal;transform:scaleX(0.9000);transform-origin:0 0;">0</div>
<div style="left:1153.78px;top:205px;font-size:12px;line-height:16px;white-space:nowrap;color:#fff;font-weight:normal;transform:scaleX(0.9208);transform-origin:0 0;">EUR</div>
<div style="left:505.05px;top:227px;font-size:12px;line-height:16px;white-space:nowrap;color:#fff;font-weight:normal;transform:scaleX(1.0458);transform-origin:0 0;">250000000</div>
<div style="left:575.60px;top:227px;font-size:12px;line-height:16px;white-space:nowrap;color:#fff;font-weight:normal;transform:scaleX(0.9000);transform-origin:0 0;">3</div>
<div style="left:596.20px;top:227px;font-size:12px;line-height:16px;white-space:nowrap;color:#fff;font-weight:normal;transform:scaleX(0.9000);transform-origin:0 0;">5</div>
<div style="left:618.10px;top:227px;font-size:12px;line-height:16px;white-space:nowrap;color:#fff;font-weight:normal;transform:scaleX(0.9000);transform-origin:0 0;">0</div>
<div style="left:638.25px;top:227px;font-size:12px;line-height:16px;white-space:nowrap;color:#fff;font-weight:normal;transform:scaleX(0.8489);transform-origin:0 0;">Cirsmu stigošana</div>
<div style="left:745.70px;top:227px;font-size:12px;line-height:16px;white-space:nowrap;color:#fff;font-weight:normal;transform:scaleX(0.9000);transform-origin:0 0;">ha</div>
<div style="left:821.00px;top:227px;font-size:12px;line-height:16px;white-space:nowrap;color:#fff;font-weight:normal;transform:scaleX(0.9000);transform-origin:0 0;">0,99</div>
<div style="left:886.40px;top:227px;font-size:12px;line-height:16px;white-space:nowrap;color:#fff;font-weight:normal;transform:scaleX(0.9000);transform-origin:0 0;">0</div>
<div style="left:957.30px;top:227px;font-size:12px;line-height:16px;white-space:nowrap;color:#fff;font-weight:normal;transform:scaleX(0.9000);transform-origin:0 0;">0</div>
<div style="left:1054.60px;top:227px;font-size:12px;line-height:16px;white-space:nowrap;color:#fff;font-weight:normal;transform:scaleX(0.9000);transform-origin:0 0;">0</div>
<div style="left:1153.78px;top:227px;font-size:12px;line-height:16px;white-space:nowrap;color:#fff;font-weight:normal;transform:scaleX(0.9208);transform-origin:0 0;">EUR</div>
<div style="left:507.20px;top:290px;font-size:12px;line-height:16px;white-space:nowrap;color:#000;font-weight:normal;transform:scaleX(0.8000);transform-origin:0 0;">DU</div>
<div style="left:546.84px;top:288px;font-size:12px;line-height:16px;white-space:nowrap;color:#000;font-weight:normal;transform:scaleX(0.8600);transform-origin:0 0;">Izpildītāji</div>
<div style="left:598.60px;top:289px;width:37.40px;height:16px;overflow:hidden"><div style="left:0;top:0;font-size:12px;line-height:16px;white-space:nowrap;color:#000;font-weight:normal;transform:scaleX(0.9000);transform-origin:0 0;">PN akti</div></div>
<div style="left:509.43px;top:352px;font-size:12px;line-height:16px;white-space:nowrap;color:#000;font-weight:normal;transform:scaleX(0.8660);transform-origin:0 0;">Pieejamie izpildītāji:</div>
<div style="left:507.50px;top:370px;font-size:12px;line-height:16px;white-space:nowrap;color:#fff;font-weight:normal;transform:scaleX(0.8983);transform-origin:0 0;">Testa persona Privātpers., 110011-11011, Navtāda iela 7, Saulkrasti, LV-2222</div>
<div style="left:510.00px;top:397px;font-size:12px;line-height:16px;white-space:nowrap;color:#000;font-weight:normal;transform:scaleX(0.8603);transform-origin:0 0;">Atbildīgais:</div>
<div style="left:1096.42px;top:345px;font-size:12px;line-height:16px;white-space:nowrap;color:#6d6d6d;font-weight:normal;transform:scaleX(0.8774);transform-origin:0 0;">DU pret izpildītāju</div>
<div style="left:509.53px;top:470px;font-size:12px;line-height:16px;white-space:nowrap;color:#000;font-weight:normal;transform:scaleX(0.8734);transform-origin:0 0;">Darbam norīkotie izpildītāji:</div>
<div style="left:516.90px;top:494px;font-size:12px;line-height:16px;white-space:nowrap;color:#000;font-weight:normal;transform:scaleX(0.8939);transform-origin:0 0;">Vārds/Nosaukums</div>
<div style="left:636.10px;top:494px;font-size:12px;line-height:16px;white-space:nowrap;color:#000;font-weight:normal;transform:scaleX(0.8564);transform-origin:0 0;">Atbildīgais</div>
<div style="left:700.40px;top:494px;font-size:12px;line-height:16px;white-space:nowrap;color:#000;font-weight:normal;transform:scaleX(0.8756);transform-origin:0 0;">Jur. tips</div>
<div style="left:768.12px;top:494px;font-size:12px;line-height:16px;white-space:nowrap;color:#000;font-weight:normal;transform:scaleX(0.8847);transform-origin:0 0;">Izcenojums</div>
<div style="left:853.70px;top:494px;font-size:12px;line-height:16px;white-space:nowrap;color:#000;font-weight:normal;transform:scaleX(0.8325);transform-origin:0 0;">Apjoms</div>
<div style="left:920.20px;top:494px;font-size:12px;line-height:16px;white-space:nowrap;color:#000;font-weight:normal;transform:scaleX(0.9000);transform-origin:0 0;">Vienības</div>
<div style="left:992.48px;top:494px;font-size:12px;line-height:16px;white-space:nowrap;color:#000;font-weight:normal;transform:scaleX(0.9250);transform-origin:0 0;">Reģ. nr.</div>
<div style="left:1069.90px;top:494px;font-size:12px;line-height:16px;white-space:nowrap;color:#000;font-weight:normal;transform:scaleX(0.8421);transform-origin:0 0;">Adrese</div>
<div style="left:512.80px;top:515px;font-size:12px;line-height:16px;white-space:nowrap;color:#fff;font-weight:normal;transform:scaleX(0.8867);transform-origin:0 0;">Testa persona</div>
<div style="left:696.61px;top:515px;font-size:12px;line-height:16px;white-space:nowrap;color:#fff;font-weight:normal;transform:scaleX(0.8873);transform-origin:0 0;">Privātpers.</div>
<div style="left:765.10px;top:515px;font-size:12px;line-height:16px;white-space:nowrap;color:#fff;font-weight:normal;transform:scaleX(0.9000);transform-origin:0 0;">0</div>
<div style="left:850.30px;top:515px;font-size:12px;line-height:16px;white-space:nowrap;color:#fff;font-weight:normal;transform:scaleX(0.9000);transform-origin:0 0;">0,99</div>
<div style="left:914.80px;top:515px;font-size:12px;line-height:16px;white-space:nowrap;color:#fff;font-weight:normal;transform:scaleX(0.9000);transform-origin:0 0;">ha</div>
<div style="left:988.58px;top:515px;font-size:12px;line-height:16px;white-space:nowrap;color:#fff;font-weight:normal;transform:scaleX(0.9233);transform-origin:0 0;">110011-11011</div>
<div style="left:1065.10px;top:515px;width:139.90px;height:16px;overflow:hidden"><div style="left:0;top:0;font-size:12px;line-height:16px;white-space:nowrap;color:#fff;font-weight:normal;transform:scaleX(0.9000);transform-origin:0 0;">Navtāda iela 7, Saulkrasti, LV</div></div>
<div style="left:646.08px;top:291px;font-size:14px;line-height:16px;white-space:nowrap;color:#ed1c24;font-weight:bold;transform:scaleX(0.9200);transform-origin:0 0;-webkit-text-stroke:0.3px #ed1c24;">1</div>
<div style="left:1141.60px;top:371px;font-size:14px;line-height:16px;white-space:nowrap;color:#ed1c24;font-weight:bold;transform:scaleX(0.9200);transform-origin:0 0;-webkit-text-stroke:0.3px #ed1c24;">2</div>
<div style="left:950.20px;top:438px;font-size:14px;line-height:16px;white-space:nowrap;color:#ed1c24;font-weight:bold;transform:scaleX(0.9200);transform-origin:0 0;-webkit-text-stroke:0.3px #ed1c24;">3</div>
<svg style="position:absolute;left:0;top:0" width="1233" height="689" viewBox="0 0 1233 689"><g fill="none" stroke="#ed1c24" stroke-width="5" shape-rendering="crispEdges"><ellipse cx="570.85" cy="299.3" rx="64.25" ry="18.7"/><ellipse cx="798.5" cy="379.75" rx="331" ry="19.4"/><ellipse cx="791.1" cy="445" rx="145.1" ry="27.5"/></g></svg></body></html>
